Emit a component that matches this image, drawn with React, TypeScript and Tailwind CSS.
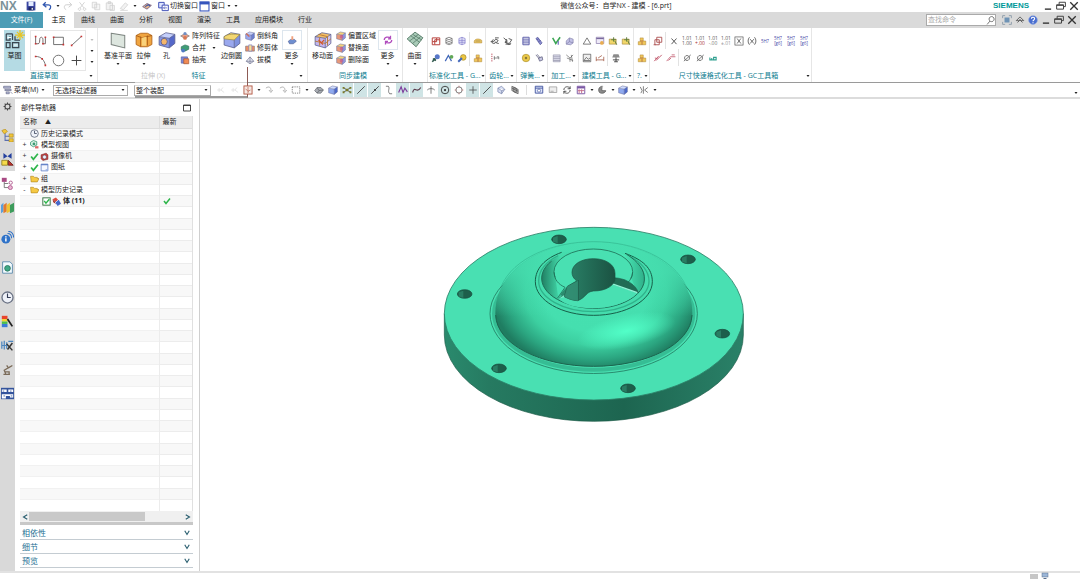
import type { ReactNode } from "react";
import clsx from "clsx";

const P = "#7a74c8";
const G = "#555";

const cube = (front: string, top: string, side: string) => (
  <>
    <path d="M1 5 L10 6.5 V15 L1 12.5Z" fill={front} />
    <path d="M1 5 L7 1.5 L15 3 L10 6.5Z" fill={top} />
    <path d="M10 6.5 L15 3 V11 L10 15Z" fill={side} />
    <path d="M1 5 L10 6.5 L15 3 L7 1.5Z M10 6.5V15 L1 12.5V5 M15 3V11L10 15" fill="none" stroke="#5a5f8f" strokeWidth=".7" />
  </>
);

const num = (a: string, b: string, c: string) => (
  <>
    <text x="8" y="7" fontSize="8" textAnchor="middle" fill={G}>{a}</text>
    <text x="8" y="15" fontSize="8" textAnchor="middle" fill={c}>{b}</text>
  </>
);

const icons: Record<string, ReactNode> = {
  save: <><rect x="1" y="1" width="14" height="14" fill="#3a46a0" /><rect x="4" y="1" width="8" height="7" fill="#e4ecff" /><rect x="4" y="10" width="8" height="5" fill="#1d2560" /><rect x="9" y="11" width="2" height="3" fill="#fff" /></>,
  undo: <path d="M6 2 L2 6 L7 10 M2 6 H10 C15 6 15 12 11 14" fill="none" stroke="#2f56b0" strokeWidth="2" />,
  redo: <path d="M10 2 L14 6 L9 10 M14 6 H6 C1 6 1 12 5 14" fill="none" stroke="#d0d0d0" strokeWidth="1.6" />,
  cut: <path d="M4 2 L11 11 M12 2 L5 11 M4 11a2 2 0 1 0 .1 0M12 11a2 2 0 1 0 .1 0" fill="none" stroke="#cfcfcf" strokeWidth="1.4" />,
  copy: <path d="M2 2H9V11H2Z M6 5H14V14H6Z" fill="#f6f6f6" stroke="#cfcfcf" strokeWidth="1.2" />,
  paste: <path d="M2 3H12V14H2Z M5 1H9V4H5Z M8 7H15V15H8Z" fill="#f2f2f2" stroke="#cfcfcf" strokeWidth="1.2" />,
  eraser: <path d="M2 12 L10 3 L14 6 L7 14Z M2 15H14" fill="#f2f2f2" stroke="#d3d3d3" strokeWidth="1.3" />,
  repeat: <><path d="M1 9 L8 4 L15 7 L8 13Z" fill="#e3b48c" stroke="#68557f" strokeWidth="1.2" /><path d="M5 9 L10 6 L13 8" fill="none" stroke="#3d55a5" strokeWidth="1.8" /></>,
  swap: <><path d="M1 2H9V10H1Z" fill="#dfe6ff" stroke="#3d4db5" strokeWidth="1.4" /><path d="M6 6H15V14H6Z" fill="#fff" stroke="#3d4db5" strokeWidth="1.4" /><path d="M8 10H13M10 8L8 10L10 12" stroke="#3d4db5" fill="none" /></>,
  window: <><rect x="1.5" y="1.5" width="13" height="13" fill="#fff" stroke="#3554bd" strokeWidth="1.6" /><rect x="1" y="1" width="14" height="4" fill="#3554bd" /></>,
  min: <path d="M3 13H13" stroke="#333" strokeWidth="2.2" />,
  restore: <path d="M5 6V2H15V9H12 M1 6H12V13H1Z M1 7H12" fill="none" stroke="#444" strokeWidth="1.6" />,
  close: <path d="M2 2L14 14M14 2L2 14" stroke="#333" strokeWidth="2.2" />,
  search: <path d="M10 1a4.5 4.5 0 1 1-.1 0M7 9L2 15" fill="none" stroke="#666" strokeWidth="1.6" />,
  fit: <><rect x="4" y="4" width="8" height="8" fill="#6f93b5" /><path d="M1 5V1H5M11 1H15V5M15 11V15H11M5 15H1V11" fill="none" stroke="#8a9aa8" strokeWidth="1.4" /></>,
  up: <path d="M2 9L8 3L14 9H10L8 7L6 9ZM4 12L8 8L12 12" fill="none" stroke="#555" strokeWidth="1.4" />,
  help: <><circle cx="8" cy="8" r="7" fill="#4a6fd0" stroke="#8fa6e0" /><path d="M5.5 6C5.500 2.500 11 3 10.500 6C10.500 8 8 8 8 10M8 11.500V13" fill="none" stroke="#fff" strokeWidth="1.8" /></>,
  sketch: <><path d="M1 3H6M1 3V8H4V5M6 3V8M1 10H4V14H1ZM6 10H11V14H6ZM8 5V8H12" fill="none" stroke="#3b4650" strokeWidth="1" /><path d="M2 6H5M7 12H10" stroke="#fff" strokeWidth=".8" /><path d="M12 0V8M8 4H16M9.500 1.500L14.500 6.500M14.500 1.500L9.500 6.500" stroke="#e8c424" strokeWidth="1" /></>,
  profile: <><path d="M2 3V12H5C7 12 7 9 7 7C7 3 11 3 11 7V12H14V4" fill="none" stroke="#6b5a5a" strokeWidth="1.1" /><path d="M1 2h2v2H1zM1 11h2v2H1zM13 3h2v2h-2zM10 11h2v2h-2z" fill="#c33" /></>,
  rect: <><path d="M2 4H14V13H2Z" fill="none" stroke="#555" /><path d="M1 3h2v2H1zM13 12h2v2h-2z" fill="#c33" /></>,
  line: <><path d="M2 14L14 3" stroke="#555" /><path d="M1 13h2v2H1zM13 2h2v2h-2z" fill="#c33" /></>,
  arc: <><path d="M2 3C9 3 13 8 14 14" fill="none" stroke="#555" /><path d="M1 2h2v2H1zM13 13h2v2h-2zM9 5h2v2H9z" fill="#c33" /></>,
  circle: <circle cx="8" cy="8" r="6.500" fill="none" stroke="#555" />,
  plus: <path d="M8 2V14M2 8H14" stroke="#444" strokeWidth="1.2" />,
  plane: <path d="M2 2L14 4V15L2 12Z" fill="#dde6df" stroke="#7d8580" strokeWidth=".9" />,
  extrude: <><path d="M1 4L5 2H11L15 4V12L11 14H5L1 12Z" fill="#f0a540" stroke="#b3661b" strokeWidth=".8" /><path d="M5 5V14M11 4V13M1 4L6 6L15 4" fill="none" stroke="#a85b16" strokeWidth=".8" /><path d="M6 6V13H10V5Z" fill="#f9d27b" /></>,
  hole: <>{cube("#8498e8", "#c4cffc", "#5568c9")}<ellipse cx="5.500" cy="9.500" rx="2.800" ry="3" fill="#f4b66a" stroke="#4d5490" strokeWidth=".7" /></>,
  pattern: <><path d="M1 8L8 4L15 8L8 12Z" fill="#e9a18a" stroke="#777" /><circle cx="8" cy="4" r="2.500" fill="#6d8fc7" /><circle cx="8" cy="11" r="3" fill="#d97852" /></>,
  unite: <><path d="M2 6L8 3L14 5V10L8 13L2 11Z" fill="#3f9d77" stroke="#2d6b55" /><circle cx="5" cy="12" r="3" fill="#4f79c4" /></>,
  shell: <><path d="M2 3H12V13H2Z" fill="#7d89d8" stroke="#50589a" /><path d="M6 6H14V14H6Z" fill="#f08b54" stroke="#a04d28" /></>,
  blend: <>{cube("#9aa8ee", "#f6dc75", "#7f92e0")}<path d="M1 5C5 2 10 3 15 3L10 8L1 7Z" fill="#f3d772" stroke="#94813e" strokeWidth=".6" /></>,
  chamfer: <>{cube("#9aa8ee", "#c8d0fa", "#6e7fd0")}<path d="M2 4L7 9" stroke="#d46a4e" strokeWidth="2" /></>,
  trim: <><path d="M1 5H15V13H1Z" fill="#ef8f68" stroke="#777" /><path d="M6 3H11V13H6Z" fill="#f5e196" stroke={P} /></>,
  draft: <path d="M2 10L8 3L14 10L8 14ZM8 3V14M2 10H14" fill="#e8eaf4" stroke="#727590" strokeWidth="1.100" />,
  stamp: <><path d="M2 10L6 7H12L15 10L10 14H4Z" fill="#6f8fd0" stroke="#4f5f96" /><path d="M7 2H10V8H7Z" fill="#f1a07c" /></>,
  moveFace: <>{cube("#c3b6ee", "#f3c06a", "#d2c6f2")}<path d="M1 9L10 11L15 7M5 6V13M12 5V13M4 3L12 5" fill="none" stroke="#b9772f" strokeWidth=".8" /><path d="M4 8L8 12M6 11L9 8" stroke="#d2552b" strokeWidth="1" /></>,
  face: <>{cube("#e79a7a", "#f5d37b", "#8f9be0")}<circle cx="9" cy="9" r="3" fill="#c5508f" opacity=".6" /></>,
  sync: <path d="M2 8C2 3 9 2 12 5M12 1V6H8M14 8C14 13 7 14 4 11M4 15V10H8" fill="none" stroke="#b04bbd" strokeWidth="2" />,
  surface: <><path d="M1 7L8 1L15 6L9 14Z" fill="#a9cbb8" stroke="#567a68" strokeWidth=".8" /><path d="M3 9L11 3M6 11L13 5M4 4L12 10M6 3L14 8" stroke="#567a68" strokeWidth=".7" /></>,
  std1: <path d="M2 3H9V9H2ZM6 6H14V14H6ZM9 3H14V6M2 9V14H6" fill="none" stroke="#b8433e" strokeWidth="1.600" />,
  std2: <path d="M3 4L8 2L13 4L8 6ZM3 4V12L8 14L13 12V4M3 7L8 9L13 7M3 10L8 12L13 10" fill="none" stroke={G} />,
  std3: <path d="M3 4L8 2L13 4V12L8 14L3 12ZM3 7H13M3 10H13M8 2V14" fill="#e6e6fa" stroke={P} />,
  std4: <><path d="M2 8C4 4 10 4 14 7V11H2Z" fill="#f0cf6a" stroke="#b58c3b" /><path d="M4 8H12" stroke="#8a6a3a" /></>,
  tool1: <><circle cx="10" cy="6" r="4" fill="#5878c9" /><path d="M2 14L7 9M3 9L8 12" stroke="#315a4e" strokeWidth="2.500" /></>,
  tool2: <><path d="M2 13L7 4L12 13" fill="none" stroke="#4267bb" strokeWidth="2" /><circle cx="12" cy="6" r="3" fill="#62a857" /></>,
  tool3: <><circle cx="10" cy="7" r="4.500" fill="#ecc640" stroke="#9c8124" /><path d="M2 14L8 8" stroke="#4267bb" strokeWidth="3" /></>,
  part: <><path d="M5 3H10V8H14V14H2V9H5Z" fill="#f0c659" stroke="#ad8430" strokeWidth=".8" /><path d="M5 8H10M8 9V14" stroke="#9c4f38" /></>,
  gear1: <path d="M1 9H6L9 5L13 7L10 11L14 12M6 6A3 3 0 1 0 9 9M8 3H14" fill="none" stroke={G} strokeWidth="1.500" />,
  gear2: <path d="M1 3L7 8L3 10L10 12L14 6L9 4M4 13H12M6 5A4 4 0 0 0 13 12" fill="none" stroke={G} strokeWidth="1.500" />,
  dims: <><path d="M3 1V15" stroke="#b45" strokeDasharray="2 1.500" strokeWidth="1.500" /><path d="M6 8H14M7 5V11M11 6H14V10" fill="none" stroke={G} /></>,
  spring1: <path d="M3 2H13M3 5H13M3 8H13M3 11H13M3 14H13M3 2V14M13 2V14" stroke="#5659a8" strokeWidth="1.500" />,
  spring2: <path d="M3 4L6 2L13 11L10 14ZM5 6L8 4M7 9L11 7" fill="#8a8cd0" stroke="#484b91" />,
  disc: <><circle cx="8" cy="8" r="6" fill="#ebc94b" stroke="#a68a24" /><circle cx="8" cy="8" r="2" fill="#8c7a3a" /></>,
  screw: <path d="M3 3L8 9M5 2L10 8M7 8L13 6L14 11L9 13Z" fill="#c8c8e4" stroke="#6a6a88" strokeWidth="1.300" />,
  check: <><path d="M1 3L6 12L13 2" fill="none" stroke="#3aa552" strokeWidth="2.500" /><path d="M10 8V14" stroke={P} strokeWidth="2" /></>,
  block: <path d="M2 8L7 3L13 5V11L9 14L2 13ZM7 3V9L2 13M7 9L13 11" fill="#c3c2e6" stroke="#7c7aa5" />,
  sheet: <path d="M2 3H13V14H2ZM2 6H13M2 9H13M2 12H13" fill="#dcdcea" stroke="#8f8fa5" />,
  net: <path d="M2 3L8 8V14M3 8L13 12M8 8L13 3M10 3L12 14" fill="none" stroke={G} />,
  tri: <path d="M8 3L14 13H2Z" fill="none" stroke="#333" />,
  form: <><path d="M2 2H14V12H2Z" fill="#eeeaf8" stroke="#7a6a9e" /><path d="M2 4H14" stroke="#7a6a9e" strokeWidth="2" /><circle cx="11" cy="11" r="3" fill="#e9ad50" /></>,
  star: <><path d="M2 5H13V13H2Z" fill="#f2d76a" stroke="#a5873a" /><path d="M9 2V9M5 6H13M11 8L14 14" stroke="#5b7b3a" strokeWidth="1.500" /></>,
  pic: <path d="M2 2H14V14H2ZM3 12L7 7L10 10L13 8M3 12H13" fill="#eee" stroke="#444" />,
  measure: <path d="M2 13V6M14 13V6M2 11H14M5 8L11 4" fill="none" stroke="#a5604b" strokeWidth="1.300" />,
  ab: <><path d="M4 2H12L14 7H2Z" fill="#8b8b8b" /><path d="M3 11H13M5 14H11M8 7V14" stroke="#444" strokeWidth="1.500" /></>,
  redbox: <path d="M6 2H14V10H6ZM3 6H10V14H3ZM1 14H4" fill="none" stroke="#a94c4c" strokeWidth="1.400" />,
  x: <path d="M4 4L12 13M12 4L4 13" stroke="#444" strokeWidth="1.400" />,
  n1: num("1.01", "1.00", "#555"),
  n2: num("1.01", "+.00", "#a33"),
  n3: num("1.01", "-.00", "#777"),
  n4: num("1.01", "±.01", "#999"),
  xbox: <><rect x="1.500" y="1.500" width="13" height="13" fill="none" stroke="#444" /><path d="M5 4L11 12M11 4L5 12" stroke="#444" strokeWidth="1.200" /></>,
  xpar: <path d="M4 2C1 5 1 11 4 14M12 2C15 5 15 11 12 14M5 5L11 12M11 5L5 12" fill="none" stroke="#444" strokeWidth="1.200" />,
  eq: <text x="8" y="11" fontSize="7" textAnchor="middle" fill="#4848a8">5H7</text>,
  eq2: <><text x="8" y="7" fontSize="7" textAnchor="middle" fill="#4848a8">5H7</text><text x="8" y="14" fontSize="7" textAnchor="middle" fill="#4848a8">[g6]</text></>,
  slash: <path d="M2 13L9 5M5 12L14 3M3 8L7 9" stroke="#c0566b" strokeWidth="1.500" />,
  slash2: <path d="M1 13L7 6H15M9 3H14M4 12L8 8" fill="none" stroke="#c0566b" strokeWidth="1.300" />,
  dia: <path d="M3 13L14 3M8 4A4 4 0 1 0 8.100 4" fill="none" stroke="#444" strokeWidth="1.100" />,
  wave: <path d="M3 7V11H6V8M7 11H13V7H9V12" fill="none" stroke="#2f9f8f" strokeWidth="1.800" />,
  menu: <path d="M1 2H12V5H1ZM3 7H13V9H3ZM5 11H10V14H5ZM12 11L15 14" fill="#b9bdd8" stroke="#5c6080" />,
  ghost: <path d="M2 8H8L11 4M5 5V11M8 8L13 12" fill="none" stroke="#b8b8b8" strokeWidth="1.500" />,
  snapBox: <><rect x="1.500" y="1.500" width="13" height="13" fill="#f6e9e4" stroke="#b0523d" strokeWidth="1.400" /><path d="M8 3V13M4 6L8 10L12 8" fill="none" stroke="#b0523d" /></>,
  curl: <path d="M3 5C8 1 12 4 11 10M8 8L11 12L14 8" fill="none" stroke="#b9b9b9" strokeWidth="1.600" />,
  dash: <rect x="2" y="3" width="12" height="10" fill="none" stroke="#444" strokeDasharray="2 1.500" />,
  eye: <><path d="M1 9L5 4H11L15 8L11 13H5Z" fill="#a9adb4" stroke="#565a60" /><path d="M5 4L8 9L15 8M8 9L5 13" fill="none" stroke="#565a60" /></>,
  cube: cube("#8fa9ee", "#cfdcff", "#4b69cb"),
  snaps: <><path d="M2 4L14 12M2 12L14 4" stroke="#444" strokeWidth="1.300" /><path d="M6 6h4v4H6zM1 3h3v3H1zM12 3h3v3h-3zM1 10h3v3H1zM12 10h3v3h-3z" fill="#7c7a25" /></>,
  diag: <path d="M2 14L14 2" stroke="#333" strokeWidth="1.300" />,
  diagDot: <><path d="M2 14L14 2" stroke="#333" strokeWidth="1.300" /><circle cx="8" cy="8" r="1.700" fill="#333" /></>,
  scurve: <path d="M3 2H7C10 6 5 9 9 14H13" fill="none" stroke="#555" strokeWidth="1.200" />,
  spline: <path d="M1 12L5 3L8 12L11 5L15 11" fill="none" stroke="#7b3a9b" strokeWidth="1.800" />,
  wavy: <path d="M1 12C4 0 8 15 14 4" fill="none" stroke="#5a3b4b" strokeWidth="1.800" />,
  cross: <path d="M8 2V14M2 8C4 5 12 5 14 8" fill="none" stroke="#555" strokeWidth="1.200" />,
  target: <><circle cx="8" cy="8" r="6" fill="none" stroke="#333" strokeWidth="1.400" /><circle cx="8" cy="8" r="1.800" fill="#333" /></>,
  ring: <><circle cx="8" cy="8" r="5" fill="none" stroke="#555" strokeWidth="1.200" /><path d="M8 1V4M8 12V15M1 8H4M12 8H15" stroke="#b66" /></>,
  wire: <path d="M3 5L9 2L14 7L9 14L3 11ZM3 5L9 9L14 7M9 9V14" fill="#d8def2" stroke="#7f8bb0" strokeWidth="1.200" />,
  layers: <path d="M3 2L10 5V12L3 9ZM6 4L13 7V14L6 11ZM3 5L13 10" fill="#bbb" stroke="#4a4a4a" />,
  viewA: <><path d="M2 2H14V13H2ZM2 5H14" fill="#dfe6fa" stroke="#3d4f9c" strokeWidth="1.400" /><circle cx="8" cy="9" r="2.500" fill="#fff" stroke="#3d4f9c" /></>,
  viewB: <path d="M2 3H14V12H2ZM4 10H9" fill="#eee" stroke="#999" strokeWidth="1.200" />,
  rotate: <path d="M3 8C3 2 11 1 13 6M13 8C13 14 5 15 3 10M13 2V6H9M3 14V10H7" fill="none" stroke="#444" strokeWidth="1.400" />,
  grid: <><path d="M2 2H14V14H2Z" fill="#fff" stroke="#7a56a3" strokeWidth="1.500" /><path d="M2 4H14" stroke="#7a56a3" strokeWidth="3" /><path d="M5 7V13M9 7V13M3 9H13" stroke="#c46d8b" strokeWidth="1.500" /></>,
  shade: <><path d="M9 2C3 2 1 8 4 12C8 15 14 12 14 9H8Z" fill="#8a8a8a" stroke="#444" /><path d="M9 2V8" stroke="#fff" /></>,
  clip: <path d="M2 3L5 9L3 13M7 2V14M9 8L14 4M9 8L14 12" fill="none" stroke="#666" strokeWidth="1.300" />,
  gear: <><circle cx="8" cy="8" r="4.500" fill="none" stroke="#444" strokeWidth="1.800" /><path d="M8 1V4M8 12V15M1 8H4M12 8H15M3 3L5 5M11 11L13 13M13 3L11 5M5 11L3 13" stroke="#444" strokeWidth="1.800" /></>,
  asm: <><path d="M5 5V14H10M5 9H10" fill="none" stroke="#5b6fae" strokeWidth="1.300" /><path d="M1 2L5 0L8 3L4 6ZM10 6H15V10H10ZM10 12H15V16H10Z" fill="#f2c53a" stroke="#a98516" strokeWidth=".7" /></>,
  constraint: <><path d="M3 0L8 4L3 7ZM13 0L8 4L13 7Z" fill="#24409e" /><path d="M1 9H8V15H1Z" fill="#f5d94a" stroke="#8b7a1c" /><path d="M9 9L15 15H9Z" fill="#c0332b" stroke="#6b1b18" /></>,
  tree: <><path d="M4 6V13H9M4 8H9" fill="none" stroke="#666" /><rect x="1" y="1" width="6" height="5" fill="#a94a84" /><circle cx="12" cy="7" r="2" fill="#fff" stroke="#a94a84" /><circle cx="11.500" cy="13" r="2.500" fill="#e9b6d2" stroke="#a94a84" /></>,
  books: <><path d="M0 5L3 2V13L0 15Z" fill="#5a9fdc" /><path d="M3 5L7 2V13L3 15Z" fill="#e27a2f" /><path d="M7 5L11 2V13L7 15Z" fill="#f0c532" /><path d="M11 5L16 2V13L11 15Z" fill="#3d9c5c" /></>,
  info: <><circle cx="6" cy="10" r="5.500" fill="#2f72c8" /><path d="M6 9V13M6 6.500V8" stroke="#fff" strokeWidth="1.800" /><path d="M8 3C12 3 13 6 13 9M9 .5C14 .5 15.500 5 15.500 8" fill="none" stroke="#2f72c8" strokeWidth="1.300" /></>,
  web: <><path d="M2 1H11L14 4V15H2Z" fill="#f3fbff" stroke="#4c7fa5" /><circle cx="8" cy="9" r="3.500" fill="#3fa987" stroke="#26715a" /></>,
  clock: <><circle cx="8" cy="8" r="6.800" fill="#eef1f8" stroke="#6a7284" strokeWidth="1.600" /><path d="M8 3V8H12" fill="none" stroke="#333d55" strokeWidth="1.400" /></>,
  palette: <><path d="M1 1H8V5H1Z" fill="#e8442c" /><path d="M1 5H8V8H1Z" fill="#f4d430" /><path d="M1 8H8V11H1Z" fill="#4bbf4a" /><path d="M1 11H8V15H1Z" fill="#3b7bd8" /><path d="M8 5L14 14" stroke="#222" strokeWidth="2.200" /></>,
  tools: <><path d="M1 3V12M4 2V13M7 4V12M1 8H8M9 3H15" stroke="#4c86c0" strokeWidth="1.500" /><path d="M7 6L14 14M14 5L8 13" stroke="#333" strokeWidth="1.800" /></>,
  robot: <path d="M3 14H11M6 14L4 9L9 6L7 3M9 6L14 3M4 11H10V14" fill="none" stroke="#7a6a58" strokeWidth="1.600" />,
  sheetset: <><rect x="0" y="1" width="16" height="14" fill="#34549c" /><path d="M1 3H7V6H1ZM9 3H15V6H9ZM1 9H15V13H11V11H6V14H1Z" fill="#fff" /><path d="M2 5H4M11 5H13M3 11H5M12 11H14" stroke="#34549c" /></>,
  views: <><path d="M1 4L6 1L12 3V9L6 12L1 9Z" fill="#dff3e8" stroke="#3b9a74" strokeWidth="1.500" /><circle cx="7" cy="7" r="2.500" fill="#3b9a74" /><path d="M9 11H15V15H9Z" fill="#d66" /></>,
  camera: <><path d="M2 5L11 2L14 5V13L5 15L2 12Z" fill="#c63a3a" stroke="#7d2424" /><circle cx="8" cy="9" r="3.500" fill="#eef" stroke="#555" /></>,
  drawing: <><path d="M2 2H14V14H2Z" fill="#f5f8ff" stroke="#5c7cc4" strokeWidth="1.400" /><path d="M2 3H14" stroke="#5c7cc4" strokeWidth="2" /><path d="M10 11H14V14H10Z" fill="#9ab2e4" /></>,
  folder: <path d="M1 4H6L8 6H13V8H16L13 14H2Z" fill="#f6c944" stroke="#a77d18" />,
  tick: <path d="M2 8L6 13L14 3" fill="none" stroke="#2db54a" strokeWidth="3" />,
  box: <><rect x="1.500" y="1.500" width="13" height="13" fill="#fff" stroke="#2c6b39" strokeWidth="1.600" /><path d="M4 7L7 11L13 4" fill="none" stroke="#2db54a" strokeWidth="2.500" /></>,
  body: <><path d="M1 4L7 1L12 6L6 9Z" fill="#d94b3f" /><path d="M5 9L12 5L16 12L10 16Z" fill="#4668c9" /><path d="M1 4L6 9V13L2 9Z" fill="#a5342c" /><path d="M3 13L13 3" stroke="#fff" strokeWidth="1.200" /></>,
  max: <path d="M1 2H15V14H1ZM1 3H15" fill="none" stroke="#333" strokeWidth="1.800" />,
  screen: <><rect x="2" y="2" width="12" height="8" fill="#9bb6d8" stroke="#5a6f8c" /><path d="M5 13H11" stroke="#5a6f8c" strokeWidth="2" /></>,
};

function Icon({ name, className = "size-[11px]" }: { name: string; className?: string }) {
  return (
    <svg viewBox="0 0 16 16" className={clsx("shrink-0", className)} aria-hidden="true">
      {icons[name]}
    </svg>
  );
}

function Arrow() {
  return (
    <svg viewBox="0 0 6 4" className="h-[2px] w-1 shrink-0" aria-hidden="true">
      <path d="M0 0H6L3 4Z" fill="#222" />
    </svg>
  );
}

function Slot({ name, on, className = "w-[13px]" }: { name: string; on?: boolean; className?: string }) {
  return (
    <button
      type="button"
      aria-label={name}
      className={clsx("flex h-full shrink-0 items-center justify-center", className, on && "bg-[#cfe4e5]")}
    >
      <Icon name={name} className="size-[10px]" />
    </button>
  );
}

function DropSlot() {
  return (
    <button type="button" aria-label="more" className="flex h-full w-[7px] shrink-0 items-center justify-center">
      <Arrow />
    </button>
  );
}

function Big({ icon, label, drop, boxed, className = "w-[23px]" }: { icon: string; label: string; drop?: boolean; boxed?: boolean; className?: string }) {
  return (
    <button type="button" className={clsx("flex shrink-0 flex-col items-center pt-[2px]", className)}>
      <span className={clsx("flex size-5 items-center justify-center", boxed && "border border-[#dde6ee]")}>
        <Icon name={icon} className={boxed ? "size-[10px]" : "size-[18px]"} />
      </span>
      <span className="mt-px h-[10px] leading-[10px] whitespace-nowrap">{label}</span>
      <span className="flex h-1 items-end">{drop && <Arrow />}</span>
    </button>
  );
}

function Stack({ items, className }: { items: [string, string, boolean?][]; className: string }) {
  return (
    <div className={clsx("flex shrink-0 flex-col pt-[2px] pl-[2px]", className)}>
      {items.map(([icon, label, drop]) => (
        <button key={label} type="button" className="flex h-3 items-center gap-[2px] whitespace-nowrap">
          <Icon name={icon} className="size-[10px]" />
          {label}
          {drop && <span className="ml-1 flex"><Arrow /></span>}
        </button>
      ))}
    </div>
  );
}

function Group({ label, children, className, drop = true }: { label?: string; children: ReactNode; className?: string; drop?: boolean }) {
  return (
    <section className={clsx("flex shrink-0 flex-col border-l border-[#e6e6e6]", className)}>
      <div className="flex h-[43px]">{children}</div>
      {label && (
        <div className="relative z-10 flex h-[10px] w-0 min-w-full items-center leading-[10px] whitespace-nowrap text-[#0c7c8f]">
          <span className="flex-1 text-center">{label}</span>
          {drop && <Arrow />}
        </div>
      )}
    </section>
  );
}

// "|" in a row stands for a thin divider
function Rows({ rows }: { rows: string[][] }) {
  return (
    <div className="flex flex-col pt-1">
      {rows.map((row, i) => (
        <div key={i} className="flex h-[17px]">
          {row.map((n, j) =>
            n === "|" ? <span key={j} className="mx-px w-px bg-[#e2e2e2]" /> : <Slot key={j} name={n} />
          )}
        </div>
      ))}
    </div>
  );
}

function TitleBar() {
  return (
    <div className="flex h-3 shrink-0 items-center overflow-hidden bg-white">
      <span className="w-6 font-['Liberation_Sans',sans-serif] text-[12px] leading-3 font-bold text-[#7c9299]">NX</span>
      <Slot name="save" className="mr-[2px] w-[14px]" />
      <Slot name="undo" className="w-[14px]" />
      <DropSlot />
      {["redo", "cut", "copy", "paste", "eraser"].map((n) => <Slot key={n} name={n} className="w-[14px]" />)}
      <DropSlot />
      <Slot name="repeat" className="mx-[2px] w-[14px]" />
      <button type="button" className="flex items-center gap-px pl-[2px] whitespace-nowrap"><Icon name="swap" />切换窗口</button>
      <button type="button" className="ml-px flex items-center gap-px whitespace-nowrap"><Icon name="window" />窗口</button>
      <DropSlot />
      <DropSlot />
      <h1 className="flex-1 truncate text-center">微信公众号：自学NX - 建模 - [6.prt]</h1>
      <span className="mr-3 font-['Liberation_Sans',sans-serif] text-[8px] font-bold text-[#009999]">SIEMENS</span>
      <Slot name="min" />
      <Slot name="restore" />
      <Slot name="close" className="w-[13px]" />
    </div>
  );
}

function TabBar() {
  const tabs = ["曲线", "曲面", "分析", "视图", "渲染", "工具", "应用模块", "行业"];
  return (
    <nav className="flex h-4 shrink-0 items-stretch bg-[#dadada]">
      <button type="button" className="w-[43px] bg-[#4c9cb5] text-white">文件(F)</button>
      <button type="button" className="w-[31px] bg-white text-black">主页</button>
      <div className="flex flex-1 gap-[15px] pl-[7px]">
        {tabs.map((t) => <button key={t} type="button">{t}</button>)}
      </div>
      <label className="my-[2px] mr-1 flex w-[70px] items-center border border-[#aaa] bg-white">
        <input type="text" placeholder="查找命令" className="min-w-0 flex-1 pl-px leading-[10px] outline-none placeholder:text-[#aaa]" />
        <Icon name="search" className="size-[9px]" />
      </label>
      {["fit", "up", "help", "min", "restore"].map((n) => <Slot key={n} name={n} />)}
      <Slot name="close" className="mr-[2px] w-[13px]" />
    </nav>
  );
}

function Ribbon() {
  return (
    <div className="flex h-[55px] shrink-0 overflow-hidden border-b border-[#9a9a9a] bg-white">
      <div className="flex w-[97px] shrink-0 pt-[2px] pl-1">
        <button type="button" className="flex h-[41px] w-[21px] flex-col items-center bg-[#b5dbe4]">
          <Icon name="sketch" className="size-5" />
          <span className="mt-px leading-[10px]">草图</span>
        </button>
        <div className="flex flex-1 flex-col pl-[5px]">
          <div className="flex h-[41px]">
            <div className="grid flex-1 grid-cols-3 place-items-center border border-[#e6e6e6]">
              {["profile", "rect", "line", "arc", "circle", "plus"].map((n) => (
                <button key={n} type="button" aria-label={n}><Icon name={n} className="size-[13px]" /></button>
              ))}
            </div>
            <div className="flex w-[11px] flex-col items-center justify-around py-1"><span className="opacity-30"><Arrow /></span><Arrow /><Arrow /></div>
          </div>
          <div className="flex h-[10px] items-center justify-between pr-1 leading-[10px] text-[#0c7c8f]">直接草图<Arrow /></div>
        </div>
      </div>
      <Group label="特征" className="pr-1">
        <Big icon="plane" label="基准平面" drop className="ml-1.5 w-7" />
        <Big icon="extrude" label="拉伸" drop />
        <Big icon="hole" label="孔" />
        <Stack className="w-[42px]" items={[["pattern", "阵列特征"], ["unite", "合并", true], ["shell", "抽壳"]]} />
        <Big icon="blend" label="边倒圆" drop />
        <Stack className="w-[37px]" items={[["chamfer", "倒斜角"], ["trim", "修剪体"], ["draft", "拔模"]]} />
        <Big icon="stamp" label="更多" drop boxed />
      </Group>
      <Group label="同步建模" className="px-[3px]">
        <Big icon="moveFace" label="移动面" />
        <Stack className="w-[42px]" items={[["face", "偏置区域"], ["face", "替换面"], ["face", "删除面"]]} />
        <Big icon="sync" label="更多" drop boxed />
      </Group>
      <Group className="pr-px"><Big icon="surface" label="曲面" drop /></Group>
      <Group label="标准化工具 - G..." className="px-px">
        <Rows rows={[["std1", "std2", "std3", "|", "std4"], ["tool1", "tool2", "tool3", "|", "part"]]} />
      </Group>
      <Group label="齿轮..." className="px-[2px]"><Rows rows={[["gear1", "gear2"], ["dims"]]} /></Group>
      <Group label="弹簧..." className="px-[2px]"><Rows rows={[["spring1", "spring2"], ["disc", "screw"]]} /></Group>
      <Group label="加工..." className="px-[2px]"><Rows rows={[["check", "block"], ["sheet", "net"]]} /></Group>
      <Group label="建模工具 - G..." className="px-px">
        <Rows rows={[["tri", "form", "star", "star"], ["pic", "measure", "|", "ab"]]} />
      </Group>
      <Group label="?." className="px-px"><Rows rows={[["part"], ["part"]]} /></Group>
      <Group label="尺寸快速格式化工具 - GC工具箱" className="border-r px-px">
        <Rows
          rows={[
            ["redbox", "|", "x", "n1", "n2", "n3", "n4", "xbox", "xpar", "eq", "eq2", "eq2", "eq2"],
            ["slash", "slash2", "|", "dia", "dia", "wave"],
          ]}
        />
      </Group>
    </div>
  );
}

function Picker({ label, value, className }: { label: string; value: string; className: string }) {
  return (
    <label className={clsx("relative z-10 flex h-[11px] shrink-0 items-center border border-[#aaa] bg-white pr-[2px]", className)}>
      <select aria-label={label} className="min-w-0 flex-1 appearance-none pl-px leading-[9px] outline-none">
        <option>{value}</option>
      </select>
      <Arrow />
    </label>
  );
}

function SelectionBar() {
  const snaps: [string, boolean?][] = [
    ["eye"], ["cube"], ["snaps", true], ["diag", true], ["diagDot", true], ["scurve"], ["spline", true], ["wavy", true],
    ["cross"], ["target", true], ["ring"], ["plus", true], ["diag", true], ["wire"], ["layers"],
  ];
  return (
    <div className="flex h-[16px] shrink-0 items-center border-b-2 border-[#dcdcdc] bg-white">
      <button type="button" className="flex w-[46px] items-center gap-px pl-[3px] whitespace-nowrap">
        <Icon name="menu" className="size-[10px]" />菜单(M)<span className="ml-[2px]"><Arrow /></span>
      </button>
      <Picker label="过滤器" value="无选择过滤器" className="ml-[7px] w-[75px]" />
      <Picker label="范围" value="整个装配" className="ml-1.5 w-[77px] border-t-[#ddd]" />
      <Slot name="ghost" className="ml-[3px] w-[14px]" />
      <Slot name="ghost" className="w-[13px]" />
      <Slot name="snapBox" className="relative z-10 w-[14px]" />
      <DropSlot />
      <Slot name="curl" className="w-[14px]" />
      <Slot name="curl" />
      <Slot name="dash" className="w-[14px]" />
      <DropSlot />
      <div className="flex h-full gap-px pl-[2px]">
        {snaps.map(([n, on], i) => <Slot key={i} name={n} on={on} />)}
      </div>
      <span className="mx-[5px] h-[10px] w-px bg-[#ddd]" />
      <Slot name="viewA" className="w-[14px]" />
      <Slot name="viewB" className="w-[14px]" />
      <Slot name="rotate" className="w-[14px]" />
      {["grid", "shade", "cube", "clip"].map((n) => (
        <div key={n} className="flex h-full"><Slot name={n} className="w-[14px]" /><DropSlot /></div>
      ))}
      <span className="mt-1.5 mr-[2px] ml-auto"><Arrow /></span>
    </div>
  );
}

function ResourceBar() {
  return (
    <aside className="flex w-[15px] shrink-0 flex-col bg-[#d9d9d9]">
      <button type="button" aria-label="gear" className="mb-[10px] flex h-[14px] items-center justify-center"><Icon name="gear" className="size-[9px]" /></button>
      {["asm", "constraint", "tree", "books"].map((n) => (
        <button key={n} type="button" aria-label={n} className={clsx("flex h-6 items-center justify-center", n === "tree" && "bg-white")}>
          <Icon name={n} className="size-[13px]" />
        </button>
      ))}
      <div className="my-[3px]">
        {["info", "web"].map((n) => (
          <button key={n} type="button" aria-label={n} className="flex h-[30px] w-full items-center justify-center"><Icon name={n} className="size-[13px]" /></button>
        ))}
      </div>
      {["clock", "palette", "tools", "robot", "sheetset"].map((n) => (
        <button key={n} type="button" aria-label={n} className="flex h-6 items-center justify-center"><Icon name={n} className="size-[13px]" /></button>
      ))}
    </aside>
  );
}

type Node = { mark: string; icons: string[]; label: string; child?: boolean; latest?: boolean };

const nodes: Node[] = [
  { mark: "", icons: ["clock"], label: "历史记录模式" },
  { mark: "+", icons: ["views"], label: "模型视图" },
  { mark: "+", icons: ["tick", "camera"], label: "摄像机" },
  { mark: "+", icons: ["tick", "drawing"], label: "图纸" },
  { mark: "+", icons: ["folder"], label: "组" },
  { mark: "-", icons: ["folder"], label: "模型历史记录" },
  { mark: "", icons: ["box", "body"], label: "体 (11)", child: true, latest: true },
];

function Navigator() {
  const rows: (Node | null)[] = [...nodes, ...Array(27).fill(null)];
  return (
    <section className="flex w-[185px] shrink-0 flex-col border-r border-[#cfcfcf] bg-white pr-1.5 pl-[5px]">
      <header className="flex h-[17px] shrink-0 items-center justify-between pr-[2px] pl-px">
        <h2>部件导航器</h2>
        <button type="button" aria-label="max"><Icon name="max" className="size-[8px]" /></button>
      </header>
      <div className="min-h-0 flex-1 border-r border-[#e0e0e0]">
        <table className="h-full w-full table-fixed border-collapse leading-[8px]">
          <thead>
            <tr className="bg-[#ececec] text-left">
              <th className="h-3 border-b border-[#ddd] pl-[3px] font-normal">
                名称<span className="ml-2 text-[6px]">▲</span>
              </th>
              <th className="w-[33px] border-b border-l border-[#ddd] pl-[3px] font-normal">最新</th>
            </tr>
          </thead>
          <tbody>
            {rows.map((n, i) => (
              <tr key={i} className="odd:bg-[#f8f8f8]">
                <td className="h-[11px] border-t border-[#f1f1f1] p-0">
                  {n && (
                    <div className={clsx("flex h-[9px] items-center gap-px whitespace-nowrap", n.child && "pl-3")}>
                      <span className="w-[9px] text-center text-[7px] text-[#333]">{n.mark}</span>
                      {n.icons.map((name) => <Icon key={name} name={name} className="size-[9px]" />)}
                      <span className={clsx("pl-px", n.child && "font-bold")}>{n.label}</span>
                    </div>
                  )}
                </td>
                <td className="border-t border-l border-[#ececec] p-0 pl-[3px]">
                  {n?.latest && <Icon name="tick" className="size-[8px]" />}
                </td>
              </tr>
            ))}
          </tbody>
        </table>
      </div>
      <div className="flex h-[11px] shrink-0 items-center bg-[#f0f0f0] px-[2px]">
        <Chevron className="rotate-90" />
        <div className="mx-px flex h-[9px] flex-1"><div className="w-3/4 bg-[#c9c9c9]" /></div>
        <Chevron className="-rotate-90" />
      </div>
      <div className="mb-px h-[3px] shrink-0 bg-[#c8c8c8]" />
      {["相依性", "细节", "预览"].map((t) => (
        <button key={t} type="button" className="flex h-[14px] shrink-0 items-center justify-between border-b border-[#c4ccd2] pr-[3px] pl-[2px] text-[8px] leading-3 text-[#1d6f93]">
          {t}
          <Chevron />
        </button>
      ))}
      <div className="h-[3px] shrink-0" />
    </section>
  );
}

function Chevron({ className }: { className?: string }) {
  return (
    <svg viewBox="0 0 8 8" className={clsx("size-[6px] shrink-0", className)} aria-hidden="true">
      <path d="M1 1L4 6L7 1" fill="none" stroke="#2b5f70" strokeWidth="1.500" />
    </svg>
  );
}

const bolts = [[387, 73], [774, 133], [104, 237], [877, 356], [207, 460], [594, 520]];

const domePath = "M196 296C196 160 345 80 491 80S787 160 787 296C787 386 650 454 491 454S196 386 196 296Z";

function Flange() {
  return (
    <svg viewBox="0 0 990 645" className="absolute top-[116px] left-[230px] h-[215px] w-[330px]" role="img" aria-label="体 (11)">
      <defs>
        <linearGradient id="wall">
          <stop offset="0" stopColor="#2a8a6d" />
          <stop offset=".15" stopColor="#267a61" />
          <stop offset=".6" stopColor="#1d6550" />
          <stop offset="1" stopColor="#2a8168" />
        </linearGradient>
        <radialGradient id="dome" gradientUnits="userSpaceOnUse" cx="0" cy="0" r="1" gradientTransform="translate(498 235) scale(312 230)">
          <stop offset="0" stopColor="#46e0b0" />
          <stop offset=".5" stopColor="#45dfaf" />
          <stop offset=".68" stopColor="#3ccfa0" />
          <stop offset=".86" stopColor="#2ba580" />
          <stop offset="1" stopColor="#1f7d61" />
        </radialGradient>
        <linearGradient id="domeTop" x1="0" x2="0" y1="0" y2="1">
          <stop offset="0" stopColor="#47dfb0" />
          <stop offset=".25" stopColor="#47dfb0" stopOpacity=".8" />
          <stop offset=".6" stopColor="#47dfb0" stopOpacity="0" />
        </linearGradient>
        <radialGradient id="glow">
          <stop offset="0" stopColor="#52ffc8" />
          <stop offset="1" stopColor="#52ffc8" stopOpacity="0" />
        </radialGradient>
        <linearGradient id="ring">
          <stop offset="0" stopColor="#217f63" />
          <stop offset=".18" stopColor="#43dbab" />
          <stop offset=".8" stopColor="#49e6b5" />
          <stop offset="1" stopColor="#2fae88" />
        </linearGradient>
        <linearGradient id="bore">
          <stop offset="0" stopColor="#2c846a" />
          <stop offset=".45" stopColor="#236e58" />
          <stop offset="1" stopColor="#1b5242" />
        </linearGradient>
      </defs>
      <path d="M43 296V360A448.500 259 0 0 0 940 360V296Z" fill="url(#wall)" stroke="#1b5a47" strokeWidth="2" />
      <ellipse cx="491.500" cy="296" rx="448.500" ry="259" fill="#49e0b2" stroke="#2c8068" strokeWidth="2.500" />
      <ellipse cx="491" cy="296" rx="311" ry="179.500" fill="#49e0b2" stroke="#237c62" strokeWidth="2.500" />
      <ellipse cx="491" cy="296" rx="299" ry="168" fill="#49e0b2" stroke="#36bd94" strokeWidth="12" />
      <path d={domePath} fill="url(#dome)" />
      <path d={domePath} fill="url(#domeTop)" />
      <path d="M213 215C250 128 370 80 491 80S730 128 769 215" fill="none" stroke="#34b78f" strokeWidth="2" />
      <path d="M197 300C200 388 332 454 491 454S783 388 786 300" fill="none" stroke="#1c654f" strokeWidth="3" />
      <ellipse cx="590" cy="348" rx="150" ry="50" fill="url(#glow)" transform="rotate(-12 590 348)" />
      <path d="M395 112C345 130 316 160 316 200C316 256 395 301 491 301S667 256 667 200C667 160 640 135 585 115" fill="#45dcad" stroke="#176049" strokeWidth="3" />
      <path d="M385 122C345 142 326 170 326 198C326 248 400 290 491 290S657 248 657 198C657 170 635 142 600 125" fill="none" stroke="#30b38b" strokeWidth="4" />
      <ellipse cx="490" cy="190" rx="155" ry="89" fill="url(#ring)" />
      <path d="M365 138C310 180 330 245 430 272S640 255 643 195C645 165 625 140 590 118" fill="none" stroke="#1f7058" strokeWidth="3" />
      <ellipse cx="490" cy="170" rx="118" ry="68" fill="#49e0b2" stroke="#1f7058" strokeWidth="2.500" />
      <path d="M376 185L385 250C420 290 560 295 622 235L604 190L490 235Z" fill="#49e0b2" />
      <path d="M372 172C374 195 384 207 405 217L382 250M608 172C607 185 602 194 594 202" fill="none" stroke="#1f7058" strokeWidth="2.500" />
      <path d="M383 250C400 228 405 215 440 199L452 250L405 247L392 241Z" fill="#2b8b6e" />
      <path d="M386 250L404 238L406 246" fill="#7ff2d0" stroke="#1f7058" strokeWidth="2" />
      <path d="M552 188C590 190 618 210 625 233L550 208Z" fill="#216c55" stroke="#174e3e" strokeWidth="1.500" />
      <path d="M545 206L622 233" stroke="#91f3d6" strokeWidth="4" />
      <path d="M426 172C426 148 454 131 490 131S555 148 555 175V190C555 210 530 228 490 228C468 230 468 248 443 257C428 257 412 250 403 245L412 214L440 198C430 190 426 181 426 172Z" fill="url(#bore)" stroke="#19503f" strokeWidth="2" />
      <path d="M445 196V256" stroke="#174b3b" strokeWidth="2.500" />
      <path d="M403 245L412 214L445 197V257C428 257 412 250 403 245Z" fill="#349477" opacity=".7" />
      {bolts.map(([x, y]) => (
        <g key={x}>
          <ellipse cx={x} cy={y} rx="22" ry="13" fill="#1d5f4b" stroke="#174c3c" strokeWidth="2" />
          <path d={`M${x - 18} ${y - 5}V${y + 7}L${x - 4} ${y + 12}V${y - 10}Z`} fill="#2f8a6e" opacity=".7" />
        </g>
      ))}
    </svg>
  );
}

// Command tip of the extrude button while it is fading out
function FadingTip() {
  return (
    <div className="pointer-events-none absolute top-[67px] left-[135px] h-[31px] w-[113px] border-r border-b-2 border-r-[#8d5b55] border-b-[#999] bg-white/60 pt-1 pl-1.5 leading-[10px] text-[#c4c4c4]">
      拉伸 (X)
    </div>
  );
}

export default function App() {
  return (
    <div className="flex h-screen flex-col overflow-hidden bg-white font-['Open_Sans','Noto_Sans_CJK_SC',sans-serif] text-[7px] leading-[10px] text-[#222]">
      <div className="relative flex flex-col">
        <TitleBar />
        <TabBar />
        <Ribbon />
        <SelectionBar />
        <FadingTip />
      </div>
      <div className="flex min-h-0 flex-1">
        <ResourceBar />
        <Navigator />
        <main className="relative min-w-0 flex-1 overflow-hidden bg-white">
          <Flange />
        </main>
      </div>
      <footer className="flex h-2 shrink-0 items-center justify-end gap-[3px] border-t-2 border-[#e2e2e2] pr-[31px]">
        <span className="h-[5px] w-2 bg-[#c6c6c6]" />
        <Icon name="screen" className="size-[8px]" />
      </footer>
    </div>
  );
}
